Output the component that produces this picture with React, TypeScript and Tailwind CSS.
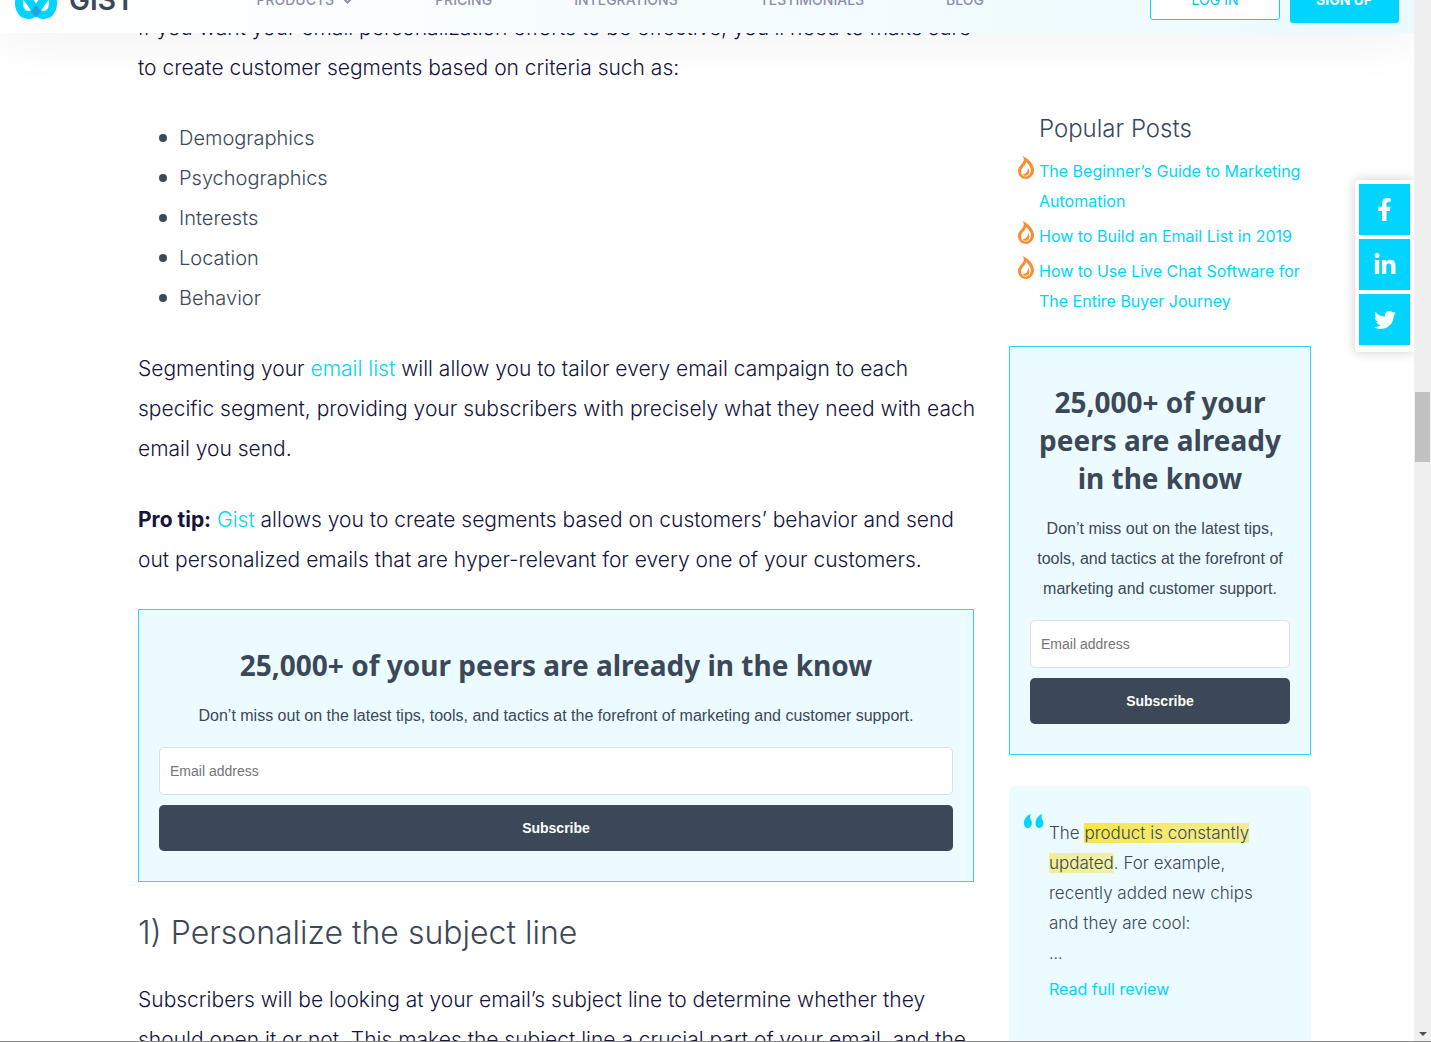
import { ReactNode } from 'react';
import { FaFacebookF, FaLinkedinIn, FaTwitter } from 'react-icons/fa';

const navItems = ['Products', 'Pricing', 'Integrations', 'Testimonials', 'Blog'];

const criteria = ['Demographics', 'Psychographics', 'Interests', 'Location', 'Behavior'];

const popularPosts = [
    'The Beginner’s Guide to Marketing Automation',
    'How to Build an Email List in 2019',
    'How to Use Live Chat Software for The Entire Buyer Journey',
];

const socials = [
    { label: 'Share on Facebook', icon: <FaFacebookF size={23} /> },
    { label: 'Share on LinkedIn', icon: <FaLinkedinIn size={24} /> },
    { label: 'Share on Twitter', icon: <FaTwitter size={22} /> },
];

function Logo() {
    return (
        <svg width="42" height="38" viewBox="0 0 42 38" fill="none" aria-hidden="true">
            <g stroke="#00d4ff" strokeWidth="8">
                <path d="M8 11C2 18 2 34 14 34C20 34 22 27 28.500 19L24 9" />
                <path d="M34 11C40 18 40 34 28 34C22 34 20 27 13.500 19L18 9" />
            </g>
            <path d="M21 24L26 30.500L21 36.500L16 30.500Z" fill="#22a4d8" />
        </svg>
    );
}

function Flame() {
    return (
        <svg className="absolute left-[9px] top-0" width="16" height="23" viewBox="0 0 16 23" aria-hidden="true">
            <path
                d="M4.500 0C10 2 15.500 8 16 13.500C16.300 18 13 22 8.500 23C3.500 23 0 19.500 0 15C0 10 5.500 7.500 5.800 4C5.900 2.500 5.300 1.200 4.500 0Z"
                fill="#f6902f"
            />
            <path
                d="M8 6C7.500 10 3 11.500 3 15.500C3 18.500 5 20.500 8 20.500C11.500 20 13.500 16 12.800 13C12 10 10 7.500 8 6Z"
                fill="#fff"
            />
            <path d="M10 12C10 15 9 17.500 4.500 18.500C6 20.500 9.500 20 10.800 18C11.800 16 11.500 14 10 12Z" fill="#f6902f" />
        </svg>
    );
}

function TextLink({ children }: { children: ReactNode }) {
    return (
        <a href="#" className="text-[#00d4ff]">
            {children}
        </a>
    );
}

function SubscribeBox({ id }: { id: string }) {
    return (
        <form
            className="border border-[#2fd6f5] bg-[#ebfbff] px-5 pt-9 pb-[30px] text-center text-[#3c4858]"
            onSubmit={(e) => e.preventDefault()}
        >
            <h3 className="mb-[17px] font-['Noto_Sans',sans-serif] text-[28px] leading-[38px] font-bold">
                25,000+ of your peers are already in the know
            </h3>
            <p className="mb-4 font-['Liberation_Sans',sans-serif] text-base leading-[30px]">
                Don’t miss out on the latest tips, tools, and tactics at the forefront of marketing and customer support.
            </p>
            <label htmlFor={id} className="sr-only">
                Email address
            </label>
            <input
                id={id}
                type="email"
                placeholder="Email address"
                className="mb-[10px] block h-12 w-full rounded-[5px] border border-[#dcdfe8] bg-white px-[10px] font-['Liberation_Sans',sans-serif] text-sm placeholder:text-[#757575]"
            />
            <button
                type="submit"
                className="block h-[46px] w-full rounded-[5px] bg-[#3c4858] font-['Liberation_Sans',sans-serif] text-sm font-bold text-white"
            >
                Subscribe
            </button>
        </form>
    );
}

function Header() {
    return (
        <header className="absolute inset-x-0 -top-[33px] z-10 flex h-[66px] items-center bg-gradient-to-r from-white to-[#ebfaff] px-[15px] shadow-[0_10px_50px_rgba(0,0,0,0.05)]">
            <a href="#" className="flex items-center gap-3 text-[28px] font-semibold text-[#3c4858]">
                <Logo />
                GIST
            </a>
            <nav className="ml-[122px] flex gap-[82px] text-sm font-medium text-[#8d8fa6] uppercase">
                {navItems.map((item) => (
                    <a key={item} href="#" className="flex items-center gap-2">
                        {item}
                        {item === 'Products' && (
                            <svg width="11" height="7" viewBox="0 0 11 7" fill="none" stroke="currentColor" strokeWidth="2">
                                <path d="M1 1L5.500 5.500L10 1" />
                            </svg>
                        )}
                    </a>
                ))}
            </nav>
            <div className="ml-auto flex items-center gap-[10px] text-sm">
                <button className="h-10 w-[130px] rounded-[3px] border border-[#00d4ff] bg-white text-[#00c4f0]">LOG IN</button>
                <button className="h-[46px] w-[109px] rounded-[3px] bg-[#00d4ff] font-bold text-white">SIGN UP</button>
            </div>
        </header>
    );
}

export default function App() {
    return (
        <div className="relative flex h-screen overflow-hidden bg-white font-['Inter',sans-serif]">
            <div className="relative min-w-0 flex-1">
                <Header />

                <div className="grid grid-cols-[minmax(0,1fr)_302px] gap-[35px] pt-2 pr-[103px] pl-[138px]">
                    {/* Article */}
                    <main className="text-[21px] leading-10 font-light text-[#14143c]">
                        <p className="mb-[30px]">
                            If you want your email personalization efforts to be effective, you’ll need to make sure to create
                            customer segments based on criteria such as:
                        </p>
                        <ul className="mb-[31px] pl-[21px] text-xl leading-10 text-[#3c4858]">
                            {criteria.map((item) => (
                                <li key={item} className="flex items-center gap-3">
                                    <span className="size-2 rounded-full bg-[#3c4858]" />
                                    {item}
                                </li>
                            ))}
                        </ul>
                        <p className="-mr-2 mb-[31px]">
                            Segmenting your <TextLink>email list</TextLink> will allow you to tailor every email campaign to each
                            specific segment, providing your subscribers with precisely what they need with each email you send.
                        </p>
                        <p className="mb-[29px]">
                            <strong className="font-bold">Pro tip:</strong> <TextLink>Gist</TextLink> allows you to create segments
                            based on customers’ behavior and send out personalized emails that are hyper-relevant for every one of
                            your customers.
                        </p>
                        <SubscribeBox id="article-email" />
                        <h2 className="mt-[27px] mb-[23px] text-[32px] leading-[48px] text-[#3c4858]">
                            1) Personalize the subject line
                        </h2>
                        <p>
                            Subscribers will be looking at your email’s subject line to determine whether they should open it or
                            not. This makes the subject line a crucial part of your email, and the
                        </p>
                    </main>

                    {/* Sidebar */}
                    <aside className="pt-[106px] text-base leading-[30px] text-[#3c4858]">
                        <h3 className="mb-3 pl-[30px] text-2xl leading-[30px] font-light">Popular Posts</h3>
                        <ul className="mb-[30px] flex flex-col gap-[5px]">
                            {popularPosts.map((post) => (
                                <li key={post} className="relative pl-[30px]">
                                    <Flame />
                                    <TextLink>{post}</TextLink>
                                </li>
                            ))}
                        </ul>

                        <SubscribeBox id="sidebar-email" />

                        <div className="relative mt-[31px] rounded-[5px] bg-[#ebfbff] pt-8 pr-[50px] pb-[60px] pl-10">
                            <svg className="absolute top-7 left-[15px]" width="20" height="14" viewBox="0 0 20 14" fill="#00d4ff">
                                <path d="M7 0C5.500 2 5.500 4 7.200 6.500C9 10 7 14 4 14C1 14 0 11.500 0 9C0 5 3 1 7 0Z" />
                                <path d="M18.500 0C17 2 17 4 18.700 6.500C20.500 10 18.500 14 15.500 14C12.500 14 11.500 11.500 11.500 9C11.500 5 14.500 1 18.500 0Z" />
                            </svg>
                            <p className="text-[17px] leading-[30px] font-light">
                                The{' '}
                                <mark className="bg-transparent bg-gradient-to-r from-[#f8e547] to-[#f0f0a8] text-inherit">
                                    product is constantly updated
                                </mark>
                                . For example, recently added new chips and they are cool:
                            </p>
                            <p className="font-light">...</p>
                            <p className="mt-[6px]">
                                <TextLink>Read full review</TextLink>
                            </p>
                        </div>
                    </aside>
                </div>

                {/* Share buttons */}
                <div className="absolute top-[180px] right-0 flex flex-col gap-1 rounded-l-[4px] bg-white pt-1 pr-1 pb-[7px] pl-1 shadow-[0_0_12px_rgba(0,0,0,0.2)]">
                    {socials.map(({ label, icon }) => (
                        <a
                            key={label}
                            href="#"
                            aria-label={label}
                            className="flex size-[51px] items-center justify-center bg-[#00d4ff] text-white"
                        >
                            {icon}
                        </a>
                    ))}
                </div>
            </div>

            {/* Scroll track */}
            <div className="relative z-10 flex w-[17px] shrink-0 flex-col items-center justify-between bg-[#f0f0f0] pt-[392px] pb-[6px]">
                <div className="h-[70px] w-[15px] bg-[#c1c1c1]" />
                <svg width="8" height="4" viewBox="0 0 8 4" fill="#505050">
                    <path d="M0 0H8L4 4Z" />
                </svg>
            </div>
            <div className="absolute inset-x-0 bottom-0 z-20 h-px bg-[#8a8a8a]" />
        </div>
    );
}
